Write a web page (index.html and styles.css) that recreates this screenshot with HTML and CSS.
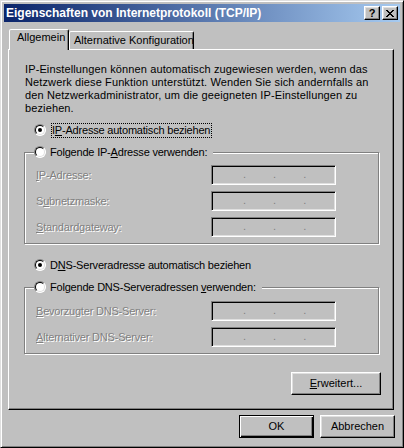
FILE: index.html
```html
<!DOCTYPE html>
<html lang="de">
<head>
<meta charset="utf-8">
<title>Eigenschaften von Internetprotokoll (TCP/IP)</title>
<link rel="stylesheet" href="styles.css">
</head>
<body>
<div class="window">
  <div class="titlebar">
    <span class="title">Eigenschaften von Internetprotokoll (TCP/IP)</span>
    <div class="caption-btns">
      <span class="cbtn cbtn-help">?</span>
      <span class="cbtn"><svg width="8" height="7" viewBox="0 0 8 7"><path d="M0 0h2v1H0z M6 0h2v1H6z M1 1h2v1H1z M5 1h2v1H5z M2 2h4v1H2z M3 3h2v1H3z M2 4h4v1H2z M1 5h2v1H1z M5 5h2v1H5z M0 6h2v1H0z M6 6h2v1H6z" fill="#000"/></svg></span>
    </div>
  </div>
  <div class="client">
    <div class="tabs">
      <div class="tab tab-active">Allgemein</div>
      <div class="tab tab-inactive">Alternative Konfiguration</div>
    </div>
    <div class="panel">
      <p class="intro">IP-Einstellungen können automatisch zugewiesen werden, wenn das<br>Netzwerk diese Funktion unterstützt. Wenden Sie sich andernfalls an<br>den Netzwerkadministrator, um die geeigneten IP-Einstellungen zu<br>beziehen.</p>

      <div class="opt opt-first">
        <span class="radio radio-checked"></span>
        <span class="opt-label focused">I<u>P</u>-Adresse automatisch beziehen</span>
      </div>

      <fieldset class="group group-ip">
        <legend>
          <span class="opt">
            <span class="radio"></span>
            <span class="opt-label">Folgende IP-<u>A</u>dresse verwenden:</span>
          </span>
        </legend>
        <div class="field">
          <span class="field-label disabled"><u>I</u>P-Adresse:</span>
          <span class="ip"><span>.</span><span>.</span><span>.</span></span>
        </div>
        <div class="field">
          <span class="field-label disabled">S<u>u</u>bnetzmaske:</span>
          <span class="ip"><span>.</span><span>.</span><span>.</span></span>
        </div>
        <div class="field">
          <span class="field-label disabled"><u>S</u>tandardgateway:</span>
          <span class="ip"><span>.</span><span>.</span><span>.</span></span>
        </div>
      </fieldset>

      <div class="opt opt-dns">
        <span class="radio radio-checked"></span>
        <span class="opt-label">D<u>N</u>S-Serveradresse automatisch beziehen</span>
      </div>

      <fieldset class="group group-dns">
        <legend>
          <span class="opt">
            <span class="radio"></span>
            <span class="opt-label">Folgende DNS-Serveradressen <u>v</u>erwenden:</span>
          </span>
        </legend>
        <div class="field">
          <span class="field-label disabled"><u>B</u>evorzugter DNS-Server:</span>
          <span class="ip"><span>.</span><span>.</span><span>.</span></span>
        </div>
        <div class="field">
          <span class="field-label disabled"><u>A</u>lternativer DNS-Server:</span>
          <span class="ip"><span>.</span><span>.</span><span>.</span></span>
        </div>
      </fieldset>

      <div class="adv-row">
        <button class="btn btn-adv" type="button"><u>E</u>rweitert...</button>
      </div>
    </div>
    <div class="actions">
      <button class="btn btn-default" type="button">OK</button>
      <button class="btn" type="button">Abbrechen</button>
    </div>
  </div>
</div>
</body>
</html>
```

FILE: styles.css
```css
* { box-sizing: border-box; }
html, body { margin: 0; padding: 0; }
body {
  font-family: "Liberation Sans", Arial, sans-serif;
  font-size: 11px;
  line-height: 13px;
  color: #000;
  background: #c0c0c0;
}
u { text-decoration-thickness: 1px; text-underline-offset: 1px; }

.window {
  width: 404px;
  height: 448px;
  background: #c0c0c0;
  border: 1px solid;
  border-color: #dfdfdf #000 #000 #dfdfdf;
  box-shadow: inset 1px 1px #fff, inset -1px -1px #808080;
  padding: 3px;
  display: flex;
  flex-direction: column;
}

.titlebar {
  height: 18px;
  flex: none;
  display: flex;
  align-items: center;
  justify-content: space-between;
  padding-left: 2px;
  background: linear-gradient(to right, #0a246a, #a6caf0);
}
.title {
  color: #fff;
  font-weight: bold;
  font-size: 12px;
  line-height: 14px;
  white-space: nowrap;
}
.caption-btns { display: flex; gap: 2px; margin-right: 2px; }
.cbtn {
  width: 16px;
  height: 14px;
  background: #c0c0c0;
  border: 1px solid;
  border-color: #fff #000 #000 #fff;
  box-shadow: inset -1px -1px #808080, inset 1px 1px #dfdfdf;
  display: flex;
  align-items: center;
  justify-content: center;
}
.cbtn-help { font-weight: bold; font-size: 11px; line-height: 10px; }

.client {
  flex: 1;
  display: flex;
  flex-direction: column;
  padding: 7px 5px 0 4px;
}

.tabs { display: flex; align-items: flex-end; height: 20px; padding-left: 1px; }
.tab {
  border: 1px solid;
  border-bottom: 0;
  border-color: #fff #000 transparent #fff;
  box-shadow: inset -1px 0 #808080;
  border-radius: 2px 2px 0 0;
  white-space: nowrap;
  background: #c0c0c0;
}
.tab-active {
  width: 60px;
  height: 21px;
  padding: 1px 0 0 7px;
  margin-bottom: -1px;
  position: relative;
  z-index: 1;
}
.tab-inactive { width: 125px; height: 18px; padding: 2px 0 0 4px; }

.panel {
  height: 361px;
  margin-right: 1px;
  border: 1px solid;
  border-color: #fff #000 #000 #fff;
  box-shadow: inset -1px -1px #808080;
  padding: 13px 0 0 15px;
}
.intro { margin: 0 0 0 1px; white-space: nowrap; letter-spacing: 0.12px; }

.opt { display: flex; align-items: flex-start; }
.opt-first { margin: 9px 0 0 10px; }
.opt-dns { margin: 15px 0 0 10px; }
.radio {
  flex: none;
  width: 12px;
  height: 12px;
  border-radius: 50%;
  border: 1px solid;
  border-color: #808080 #fff #fff #808080;
  background: #fff;
  position: relative;
}
.radio::before {
  content: "";
  position: absolute;
  inset: 0;
  border-radius: 50%;
  border: 1px solid;
  border-color: #000 #dfdfdf #dfdfdf #000;
}
.radio-checked::after {
  content: "";
  position: absolute;
  left: 3px;
  top: 3px;
  width: 4px;
  height: 4px;
  border-radius: 50%;
  background: #000;
}
.opt-label { margin-left: 4px; white-space: nowrap; letter-spacing: -0.2px; }
.focused { outline: 1px dotted #000; padding-right: 1px; margin-left: 6px; }

.group {
  width: 355px;
  margin: 9px 0 0;
  border: 1px solid #808080;
  box-shadow: inset 1px 1px #fff, 1px 1px #fff;
  padding: 6px 0 6px 9px;
  min-inline-size: 0;
}
.group-dns { padding-top: 7px; }
.group legend {
  padding: 0 6px 0 0;
  background: #c0c0c0;
  height: 13px;
}

.field { display: flex; height: 20px; margin-left: 2px; }
.field + .field { margin-top: 6px; }
.field-label { width: 175px; padding-top: 4px; white-space: nowrap; letter-spacing: -0.2px; }
.disabled { color: #808080; text-shadow: 1px 1px 0 #fff; }

.ip {
  width: 125px;
  height: 20px;
  border: 1px solid;
  border-color: #808080 #fff #fff #808080;
  box-shadow: inset 1px 1px #000, inset -1px -1px #dfdfdf;
  display: flex;
  gap: 27px;
  padding: 2px 0 0 31px;
  color: #808080;
}

.adv-row { display: flex; justify-content: flex-end; width: 357px; margin-top: 18px; }

.btn {
  font: inherit;
  color: #000;
  height: 23px;
  width: 75px;
  padding: 0;
  background: #c0c0c0;
  border: 1px solid;
  border-color: #fff #000 #000 #fff;
  box-shadow: inset -1px -1px #808080, inset 1px 1px #dfdfdf;
  line-height: 13px;
  text-align: center;
}
.btn-adv { width: 90px; }
.btn-default {
  border-color: #000;
  box-shadow: inset 1px 1px #fff, inset -1px -1px #000, inset -2px -2px #808080;
}

.actions { display: flex; justify-content: flex-end; gap: 6px; margin-top: 5px; }
```
